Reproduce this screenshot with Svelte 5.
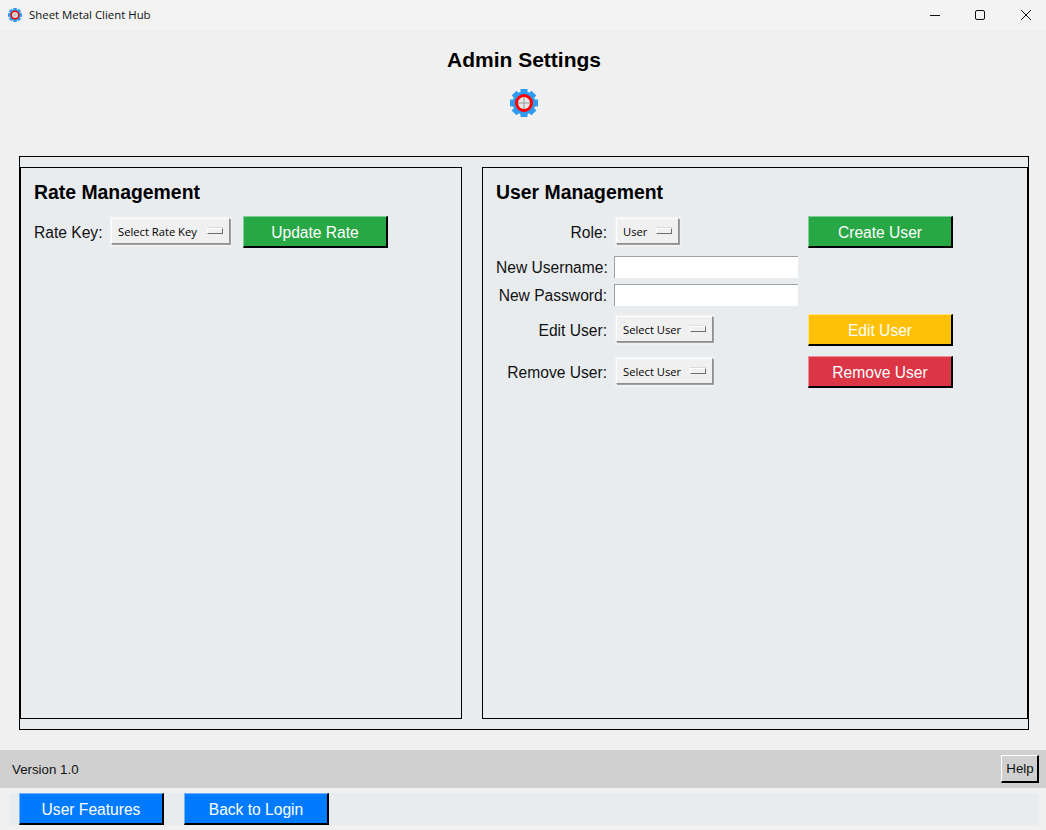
<script>
  const teeth = [0, 45, 90, 135, 180, 225, 270, 315]

  const userRows = [
    { label: 'Edit User:', menu: 'Select User', action: 'Edit User', tone: 'yellow' },
    { label: 'Remove User:', menu: 'Select User', action: 'Remove User', tone: 'red' }
  ]
</script>

{#snippet gear(size)}
  <svg class="gear" width={size} height={size} viewBox="0 0 28 28">
    {#each teeth as a}
      <rect x="10.5" y="0" width="7" height="6" fill="#2f9bf0" transform="rotate({a} 14 14)" />
    {/each}
    <circle cx="14" cy="14" r="11.5" fill="#2f9bf0" />
    <circle cx="14" cy="14" r="9" fill="#f00" />
    <circle cx="14" cy="14" r="6" fill="#e6e6e6" />
    <path d="M14 8v12M8 14h12" stroke="#999" stroke-width="1" />
  </svg>
{/snippet}

{#snippet menu(text, cls)}
  <div class="menu-ring {cls}">
    <div class="menu">
      <span>{text}</span>
      <i class="indicator"></i>
    </div>
  </div>
{/snippet}

<div class="window">
  <header class="titlebar">
    <div class="app-name">
      {@render gear(14)}
      <span class="app-title">Sheet Metal Client Hub</span>
    </div>
    <div class="controls">
      <svg width="10" height="10" viewBox="0 0 10 10"><path d="M0 5.5h10" stroke="#111" fill="none" /></svg>
      <svg width="10" height="10" viewBox="0 0 10 10"><rect x="0.5" y="0.5" width="9" height="9" rx="1.5" stroke="#111" fill="none" /></svg>
      <svg width="10" height="10" viewBox="0 0 10 10"><path d="M0 0l10 10M10 0L0 10" stroke="#111" fill="none" /></svg>
    </div>
  </header>

  <div class="page-head">
    <h1>Admin Settings</h1>
    {@render gear(28)}
  </div>

  <main class="outer">
    <section class="panel rate">
      <h2>Rate Management</h2>
      <div class="rate-row">
        <label for="rate">Rate Key:</label>
        {@render menu('Select Rate Key', 'w-rate')}
        <button id="rate" class="btn green">Update Rate</button>
      </div>
    </section>

    <section class="panel users">
      <h2>User Management</h2>
      <div class="user-form">
        <div class="row">
          <span class="lbl">Role:</span>
          <div class="cell">{@render menu('User', 'w-role')}</div>
          <button class="btn green">Create User</button>
        </div>
        <div class="row">
          <span class="lbl">New Username:</span>
          <input class="field" type="text" />
        </div>
        <div class="row tight">
          <span class="lbl">New Password:</span>
          <input class="field" type="password" />
        </div>
        {#each userRows as r, i}
          <div class="row" class:spaced={i === 1}>
            <span class="lbl">{r.label}</span>
            <div class="cell">{@render menu(r.menu, 'w-user')}</div>
            <button class="btn {r.tone}">{r.action}</button>
          </div>
        {/each}
      </div>
    </section>
  </main>

  <div class="status">
    <span>Version 1.0</span>
    <button class="help">Help</button>
  </div>

  <footer class="actions">
    <button class="btn blue">User Features</button>
    <button class="btn blue">Back to Login</button>
  </footer>
</div>

<style>
  :global(body) {
    background: #f0f0f0;
  }

  .window {
    width: 1046px;
    height: 830px;
    background: #f0f0f0;
    font-family: "Liberation Sans", Arial, sans-serif;
    color: #000;
    overflow: hidden;
  }

  .titlebar {
    height: 30px;
    background: #f3f3f3;
    display: flex;
    align-items: center;
    justify-content: space-between;
    padding: 0 15px 0 8px;
  }

  .app-name {
    display: flex;
    align-items: center;
    gap: 7px;
    font: 11.4px "Open Sans", sans-serif;
    color: #111;
  }

  .app-title {
    margin-bottom: 1px;
  }

  .controls {
    display: flex;
    gap: 35px;
  }

  .controls svg:nth-child(2) {
    margin-right: 1px;
  }

  .gear {
    display: block;
  }

  .page-head {
    height: 126px;
    padding-left: 2px;
    display: flex;
    flex-direction: column;
    align-items: center;
  }

  h1 {
    margin: 18px 0 0;
    font-size: 21px;
    line-height: 23px;
    font-weight: bold;
  }

  .page-head .gear {
    margin-top: 18px;
  }

  .outer {
    box-sizing: border-box;
    width: 1010px;
    height: 574px;
    margin-left: 19px;
    border: 1px solid #000;
    background: #e9ecef;
    padding: 10px 0;
    display: flex;
    gap: 20px;
  }

  .panel {
    box-sizing: border-box;
    height: 552px;
    border: 1px solid #000;
    padding: 13px;
  }

  .rate {
    width: 442px;
  }

  .users {
    width: 546px;
  }

  h2 {
    margin: 0 0 12px;
    font-size: 19.4px;
    line-height: 23px;
    font-weight: bold;
  }

  label,
  .lbl {
    font-size: 15.6px;
    padding-top: 1px;
    color: #111;
    white-space: nowrap;
  }

  .rate-row {
    display: flex;
    align-items: center;
    height: 32px;
  }

  .rate-row label {
    width: 75px;
  }

  .rate-row .btn {
    margin-left: 11px;
  }

  .user-form {
    display: flex;
    flex-direction: column;
    gap: 8px;
  }

  .row {
    display: flex;
    align-items: center;
  }

  .row.tight {
    margin-top: -2px;
  }

  .row.spaced {
    margin-top: 2px;
  }

  .lbl {
    width: 111px;
    margin-right: 7px;
    text-align: right;
  }

  .cell {
    width: 184px;
    margin-right: 10px;
  }

  .field {
    box-sizing: border-box;
    width: 184px;
    height: 22px;
    margin: 0;
    padding: 0 2px;
    background: #fff;
    border: 0;
    border-top: 1px solid #a0a0a0;
    border-left: 1px solid #a0a0a0;
    border-radius: 0;
  }

  .menu-ring {
    box-sizing: border-box;
    height: 31px;
    margin-bottom: 1px;
    padding: 2px;
    background: #f0f0f0;
  }

  .menu {
    box-sizing: border-box;
    height: 26px;
    display: flex;
    align-items: center;
    justify-content: space-between;
    padding: 0 6px;
    background: #f0f0f0;
    border: 1px solid;
    border-color: #fff #8f8f8f #8f8f8f #fff;
    box-shadow: 1px 1px 0 #a0a0a0;
    font: 11.2px "Open Sans", sans-serif;
    color: #000;
    white-space: nowrap;
  }

  .w-rate {
    width: 123px;
  }

  .w-role {
    width: 67px;
  }

  .w-user {
    width: 101px;
  }

  .indicator {
    box-sizing: border-box;
    width: 16px;
    height: 6px;
    background: #f0f0f0;
    border: 1px solid;
    border-color: #fff #6e6e6e #6e6e6e #fff;
    box-shadow: 0 -1px 0 #dcdcdc;
  }

  .btn {
    box-sizing: border-box;
    width: 145px;
    height: 32px;
    margin: 0;
    padding: 2px 0 0;
    border: 1px solid;
    border-right: 2px solid #000;
    border-bottom: 2px solid #000;
    border-radius: 0;
    color: #fff;
    font: 15.6px "Liberation Sans", Arial, sans-serif;
  }

  .green {
    background: #28a745;
    border-top-color: #7fd096;
    border-left-color: #7fd096;
  }

  .yellow {
    background: #ffc107;
    border-top-color: #ffe680;
    border-left-color: #ffe680;
  }

  .red {
    background: #dc3545;
    border-top-color: #ee8e99;
    border-left-color: #ee8e99;
  }

  .blue {
    background: #007bff;
    border-top-color: #73b5ff;
    border-left-color: #73b5ff;
  }

  .status {
    box-sizing: border-box;
    height: 38px;
    margin-top: 20px;
    padding: 0 7px 0 12px;
    background: #d0d0d0;
    display: flex;
    align-items: center;
    justify-content: space-between;
    font-size: 13.3px;
    color: #111;
  }

  .help {
    box-sizing: border-box;
    width: 38px;
    height: 28px;
    margin: 0;
    padding: 0 0 0 1px;
    background: #d0d0d0;
    border: 1px solid;
    border-color: #fff #000 #000 #fff;
    border-right-width: 2px;
    border-bottom-width: 2px;
    border-radius: 0;
    font: 13.3px "Liberation Sans", Arial, sans-serif;
    color: #111;
  }

  .actions {
    box-sizing: border-box;
    width: 1030px;
    height: 32px;
    margin: 5px 0 0 9px;
    padding-left: 10px;
    background: #e9ecef;
    display: flex;
    gap: 20px;
  }
</style>
